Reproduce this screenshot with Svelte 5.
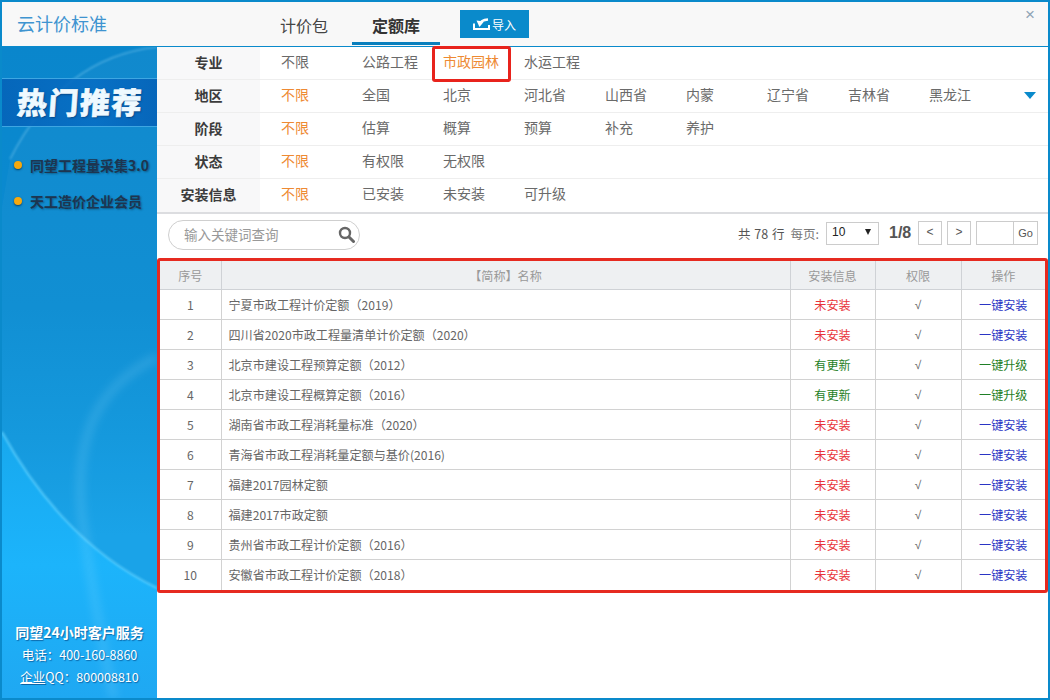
<script>
  const filters = [
    { label: '专业', items: ['不限', '公路工程', '市政园林', '水运工程'], active: 2, boxed: true },
    { label: '地区', items: ['不限', '全国', '北京', '河北省', '山西省', '内蒙', '辽宁省', '吉林省', '黑龙江'], active: 0, more: true },
    { label: '阶段', items: ['不限', '估算', '概算', '预算', '补充', '养护'], active: 0 },
    { label: '状态', items: ['不限', '有权限', '无权限'], active: 0 },
    { label: '安装信息', items: ['不限', '已安装', '未安装', '可升级'], active: 0 }
  ];
  const rows = [
    ['宁夏市政工程计价定额（2019）', 0],
    ['四川省2020市政工程量清单计价定额（2020）', 0],
    ['北京市建设工程预算定额（2012）', 1],
    ['北京市建设工程概算定额（2016）', 1],
    ['湖南省市政工程消耗量标准（2020）', 0],
    ['青海省市政工程消耗量定额与基价(2016)', 0],
    ['福建2017园林定额', 0],
    ['福建2017市政定额', 0],
    ['贵州省市政工程计价定额（2016）', 0],
    ['安徽省市政工程计价定额（2018）', 0]
  ];
</script>

<div class="win">
  <header class="head">
    <div class="title">云计价标准</div>
    <nav class="tabs">
      <span class="tab first">计价包</span>
      <span class="tab on">定额库</span>
    </nav>
    <button class="import">
      <svg width="17" height="12" viewBox="0 0 17 12"><path d="M1 5.500V11h15V7" fill="none" stroke="#fff" stroke-width="2"/><path d="M7 6C7.500 3.500 10.500 1.800 15 1.500" fill="none" stroke="#fff" stroke-width="2.400"/><path d="M3.500 2.500L11 3.500 6.500 9z" fill="#fff"/></svg>
      <span>导入</span>
    </button>
    <span class="close">×</span>
  </header>
  <div class="body">
    <aside class="side">
      <svg class="decor" width="155" height="651" viewBox="0 0 155 651" aria-hidden="true">
        <defs>
          <linearGradient id="low" x1="0" y1="0" x2="0" y2="1">
            <stop offset="0" stop-color="#17a8ee"/>
            <stop offset=".5" stop-color="#1cb4fb"/>
            <stop offset="1" stop-color="#1fa8f2"/>
          </linearGradient>
          <filter id="b1" x="-20%" y="-20%" width="140%" height="140%"><feGaussianBlur stdDeviation="1"/></filter>
          <filter id="b4" x="-50%" y="-20%" width="200%" height="140%"><feGaussianBlur stdDeviation="4"/></filter>
        </defs>
        <path d="M155 0Q60 10 8 112L0 160V651H155Z" fill="#fff" opacity=".03"/>
        <path d="M155 0Q60 10 8 112" fill="none" stroke="#8fd4f5" stroke-width="1.500" opacity=".45" filter="url(#b1)"/>
        <path d="M0 385C30 440 80 505 155 541V651H0Z" fill="url(#low)"/>
        <path d="M0 385C30 440 80 505 155 541" fill="none" stroke="#62d2ff" stroke-width="2" opacity=".8" filter="url(#b1)"/>
        <path d="M155 310Q105 335 88 380Q74 420 80 470Q92 560 112 651" fill="none" stroke="#a5e4ff" stroke-width="9" opacity=".16" filter="url(#b4)"/>
      </svg>
      <div class="banner"><span>热门推荐</span></div>
      <ul class="hot">
        <li>同望工程量采集3.0</li>
        <li>天工造价企业会员</li>
      </ul>
      <div class="service">
        <b>同望24小时客户服务</b>
        <span>电话：400-160-8860</span>
        <span><u>企业</u>QQ：800008810</span>
      </div>
    </aside>
    <main class="main">
      <section class="filters">
        {#each filters as f}
          <div class="frow">
            <div class="flabel">{f.label}</div>
            <div class="fitems">
              {#each f.items as it, i}
                <span class="fitem" class:act={i === f.active} class:boxed={f.boxed && i === f.active}>{it}</span>
              {/each}
              {#if f.more}<span class="more"></span>{/if}
            </div>
          </div>
        {/each}
      </section>
      <section class="tools">
        <div class="search">
          <span>输入关键词查询</span>
          <svg width="17" height="17" viewBox="0 0 17 17"><circle cx="7" cy="7" r="5" fill="none" stroke="#666" stroke-width="2.400"/><path d="M11 11l4.500 4.500" stroke="#666" stroke-width="3" stroke-linecap="round"/></svg>
        </div>
        <div class="pager">
          <span class="total">共 78 行</span>
          <span class="per">每页:</span>
          <div class="size"><span>10</span><i></i></div>
          <b class="pg">1/8</b>
          <span class="pbtn">&lt;</span>
          <span class="pbtn">&gt;</span>
          <div class="goto"><span class="gi"></span><span class="go">Go</span></div>
        </div>
      </section>
      <div class="tablewrap">
        <table>
          <colgroup><col class="c1" /><col /><col class="c3" /><col class="c4" /><col class="c5" /></colgroup>
          <thead>
            <tr><th>序号</th><th>【简称】名称</th><th>安装信息</th><th>权限</th><th>操作</th></tr>
          </thead>
          <tbody>
            {#each rows as r, i}
              <tr>
                <td class="ctr">{i + 1}</td>
                <td class="name">{r[0]}</td>
                <td class="ctr" class:red={!r[1]} class:green={r[1]}>{r[1] ? '有更新' : '未安装'}</td>
                <td class="ctr check">√</td>
                <td class="ctr" class:blue={!r[1]} class:green={r[1]}>{r[1] ? '一键升级' : '一键安装'}</td>
              </tr>
            {/each}
          </tbody>
        </table>
      </div>
    </main>
  </div>
</div>

<style>
  :global(body) { margin: 0; background: #fff; }
  .win {
    width: 1050px; height: 700px; box-sizing: border-box;
    border: 2px solid #0a8acb;
    display: flex; flex-direction: column;
    font-family: "Noto Sans CJK SC", "Liberation Sans", sans-serif;
    overflow: hidden;
  }
  .head {
    height: 45px; flex: none; box-sizing: border-box;
    background: #f8f8f8; border-bottom: 1px solid #0a8acb;
    display: flex; align-items: flex-start; position: relative;
  }
  .title { color: #3f94d0; font-size: 18px; line-height: 26px; margin: 8px 0 0 15px; width: 247px; }
  .tabs { display: flex; }
  .tab { width: 88px; height: 36px; margin-top: 7px; text-align: center; font-size: 16px; line-height: 33px; color: #444; box-sizing: border-box; }
  .tab.first { margin: 7px 4px 0 -4px; }
  .tab.on { font-weight: 700; color: #333; border-bottom: 3px solid #0a7fbd; }
  .import {
    margin: 8px 0 0 20px; width: 69px; height: 28px; border: 0; padding: 0;
    background: #0a8acb; color: #fff; font: inherit; font-size: 12px;
    display: flex; align-items: center; justify-content: center; gap: 2px;
  }
  .close { position: absolute; right: 13px; top: 3px; color: #8fa4b5; font-size: 17px; line-height: 20px; font-family: "Liberation Sans", sans-serif; }
  .body { flex: 1; display: flex; min-height: 0; }
  .side {
    width: 155px; flex: none; position: relative; overflow: hidden;
    background: linear-gradient(180deg, #0a86cc 0%, #0a8cd2 40%, #0e96dc 60%, #13a0e8 75%);
    display: flex; flex-direction: column;
  }
  .decor { position: absolute; left: 0; top: 0; }
  .banner {
    position: relative; margin-top: 31px; height: 49px; box-sizing: border-box;
    background: linear-gradient(90deg, rgba(5,100,185,.92), rgba(6,108,195,.85) 60%, rgba(6,100,185,.95));
    border-top: 1px solid #3ea6e2; border-bottom: 1px solid #3ea6e2;
    color: #eef9ff; font-size: 30px; font-weight: 900; line-height: 45px; padding-left: 15px;
    white-space: nowrap;
    text-shadow: 1px 1px 2px rgba(0,40,90,.7);
  }
  .banner span { display: inline-block; transform: skewX(-4deg); -webkit-text-stroke: .6px #eef9ff; letter-spacing: 1.500px; }
  .hot { position: relative; list-style: none; margin: 23px 0 0; padding: 0; }
  .hot li {
    height: 36px; line-height: 30px; padding-left: 28px; font-size: 14px; font-weight: 700; color: #1d3550; white-space: nowrap;
    text-shadow: 1px 1px 2px rgba(0,0,0,.35); position: relative;
  }
  .hot li::before {
    content: ""; position: absolute; left: 12px; top: 11px; width: 8px; height: 8px; border-radius: 50%;
    background: #f6a90f; box-shadow: 0 1px 2px rgba(0,30,60,.7);
  }
  .service {
    position: relative; margin-top: auto; height: 77px; color: #fff; text-align: center;
    display: flex; flex-direction: column; font-size: 12.500px; line-height: 22px;
    text-shadow: 1px 1px 1px rgba(0,60,120,.6);
  }
  .service b { font-size: 14px; line-height: 23px; }
  .main { flex: 1; min-width: 0; background: #fff; }
  .filters { border-bottom: 2px solid #dcdde0; }
  .frow { height: 33px; display: flex; box-sizing: border-box; border-bottom: 1px solid #eee; }
  .frow:last-child { border-bottom: 0; }
  .flabel { width: 103px; flex: none; background: #f8f8f9; text-align: center; font-size: 14px; font-weight: 700; color: #3c3c3c; line-height: 31px; }
  .fitems { flex: 1; display: flex; padding-left: 21px; position: relative; }
  .fitem { width: 81px; flex: none; font-size: 14px; line-height: 28px; color: #6a6a6a; white-space: nowrap; }
  .fitem.act { color: #ee8a33; }
  .fitem.boxed::after {
    content: ""; position: absolute; left: 172px; top: -1px; width: 79px; height: 36px; box-sizing: border-box; border: 3px solid #e8231c; border-radius: 3px;
  }
  .frow:first-child .fitems { z-index: 1; }
  .more { position: absolute; right: 12px; top: 12px; border: 6px solid transparent; border-top: 7px solid #0a8acb; border-bottom: 0; }
  .tools { height: 44px; box-sizing: border-box; display: flex; align-items: flex-start; justify-content: space-between; padding: 6px 10px 0 11px; }
  .search {
    width: 192px; height: 30px; box-sizing: border-box; border: 1px solid #cfcfcf; border-radius: 15px;
    display: flex; align-items: center; justify-content: space-between; padding: 0 4px 2px 15px;
    font-size: 13.500px; color: #999;
  }
  .pager { display: flex; align-items: center; font-size: 12.500px; color: #555; margin-top: 1px; height: 24px; }
  .total { word-spacing: 1px; }
  .per { margin-left: 6px; color: #777; }
  .size { width: 53px; height: 23px; box-sizing: border-box; border: 1px solid #ccc; margin-left: 7px; position: relative; padding-left: 5px; line-height: 19px; color: #222; font-family: "Liberation Sans", sans-serif; font-size: 12px; }
  .size i { position: absolute; right: 7px; top: 6px; border: 3.500px solid transparent; border-top: 6px solid #222; border-bottom: 0; }
  .pg { margin-left: 10px; width: 24px; font-size: 16px; color: #555; font-family: "Liberation Sans", sans-serif; }
  .pbtn { width: 24px; height: 24px; box-sizing: border-box; border: 1px solid #ccc; margin-left: 5px; text-align: center; line-height: 20px; font-family: "Liberation Sans", sans-serif; font-size: 12px; }
  .goto { display: flex; margin-left: 5px; height: 24px; box-sizing: border-box; border: 1px solid #ccc; width: 62px; }
  .gi { width: 36px; border-right: 1px solid #ccc; }
  .go { flex: 1; text-align: center; line-height: 22px; font-size: 11px; font-family: "Liberation Sans", sans-serif; }
  .tablewrap { width: 891px; box-sizing: border-box; border: 3px solid #e62a20; border-radius: 3px; }
  table { width: 100%; border-collapse: collapse; table-layout: fixed; font-size: 12.100px; }
  col.c1 { width: 61px; }
  col.c3 { width: 85px; }
  col.c4 { width: 86px; }
  col.c5 { width: 84px; }
  th { height: 28px; padding: 0; background: #eef0f2; border: 1px solid #cfd2d6; border-top: 0; font-weight: 400; color: #999; }
  td { height: 30px; padding: 0; border: 1px solid #d2d2d2; color: #666; box-sizing: border-box; }
  th:first-child, td:first-child { border-left: 0; }
  th:last-child, td:last-child { border-right: 0; }
  tbody tr:last-child td { border-bottom: 0; }
  .ctr { text-align: center; }
  .check { font-family: "Liberation Sans", sans-serif; font-size: 12px; }
  .name { padding-left: 7px; }
  .red { color: #e8333a; }
  .green { color: #1f7f26; }
  .blue { color: #2a35c4; }
</style>
